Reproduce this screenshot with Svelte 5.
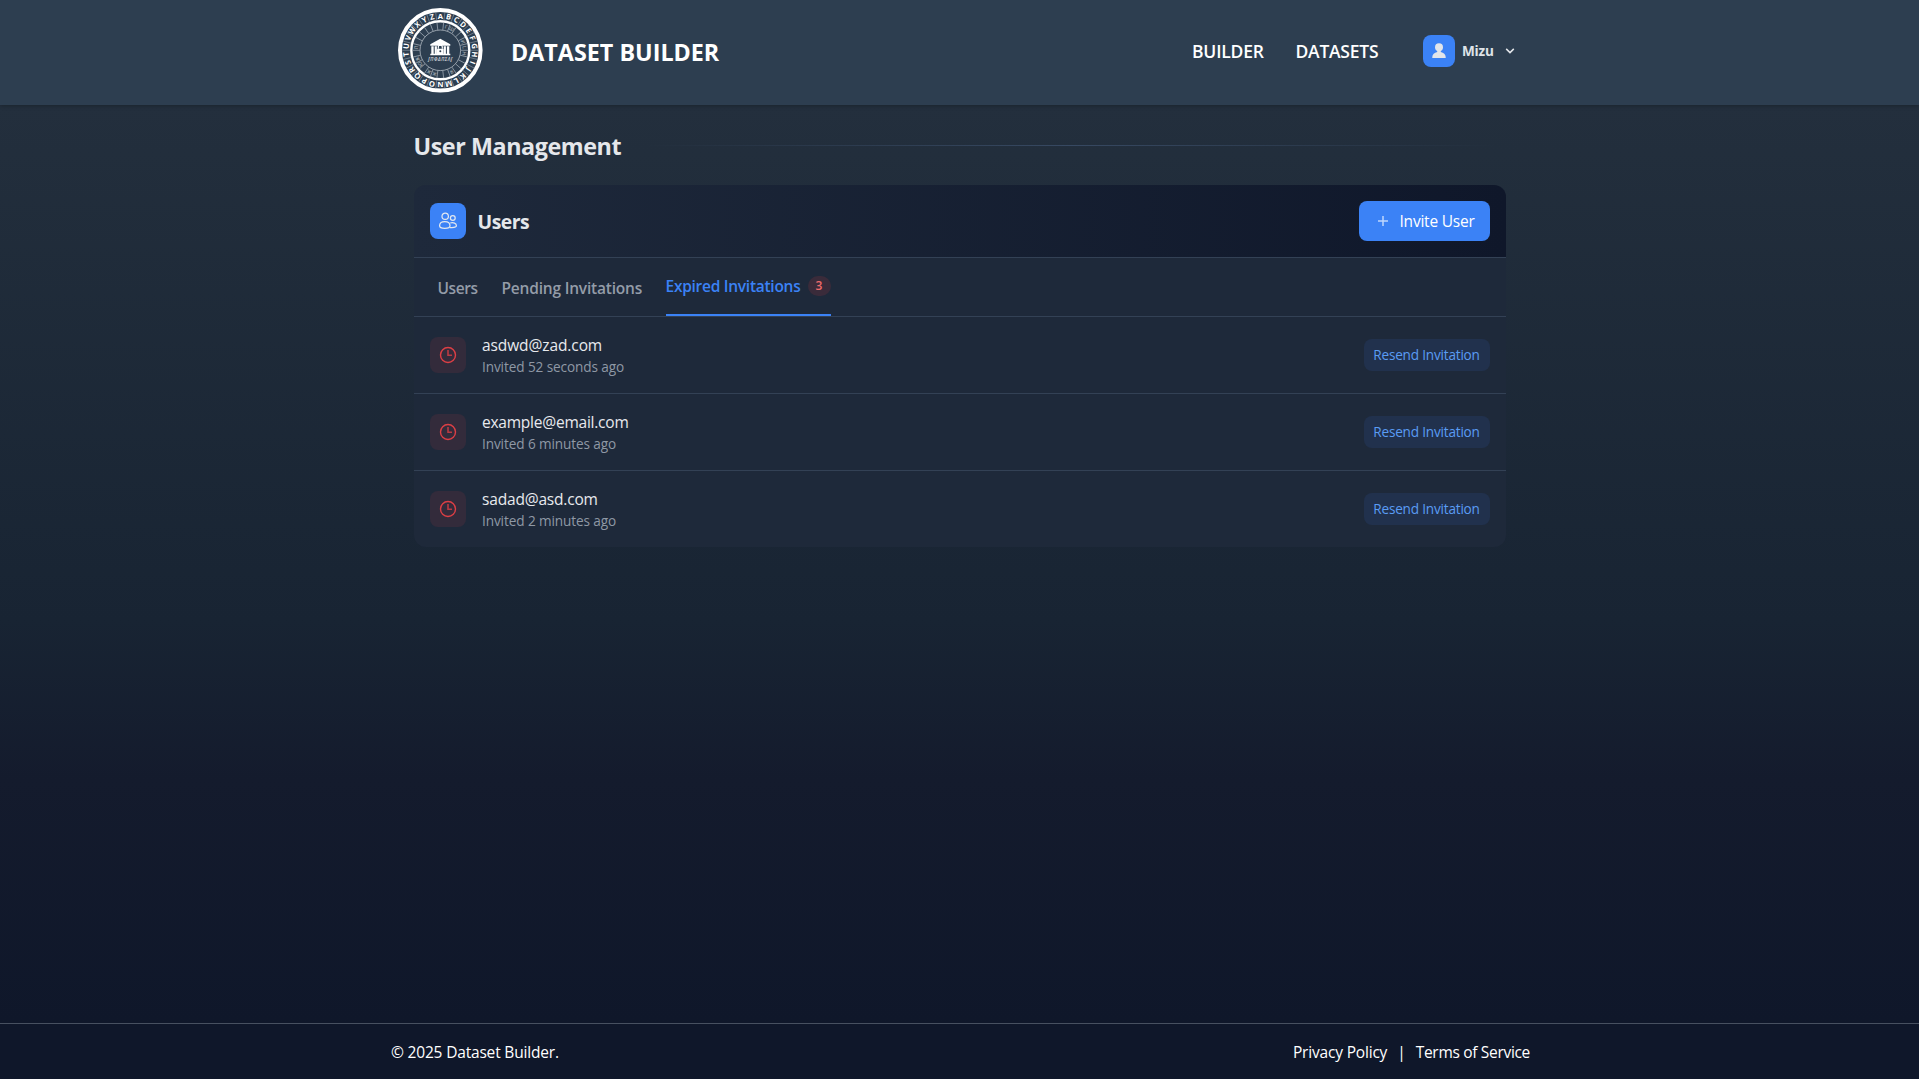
<script>
  const letters = 'ABCDEFGHIJKLMNOPQRSTUVWXYZ'.split('').map((char, i) => ({ char, angle: (i * 360) / 26 }));
  const glyphs = ['', 'Γ', 'Ш', '', '', 'И', 'L', 'H', '', '', '', 'Я', '', '', 'Ж', 'Ж', '', 'Ю', 'Ж', '', 'П', '', '', '', '', ''];

  const invitations = [
    { email: 'asdwd@zad.com', sent: 'Invited 52 seconds ago', size: 'e1' },
    { email: 'example@email.com', sent: 'Invited 6 minutes ago', size: 'e2' },
    { email: 'sadad@asd.com', sent: 'Invited 2 minutes ago', size: 'e3' }
  ];
</script>

<div class="page">
  <header>
    <div class="bar">
      <div class="brand">
        <svg class="logo" viewBox="-43.3 -43.3 86 86" width="86" height="86" aria-hidden="true">
          <circle r="40.3" fill="none" stroke="#fff" stroke-width="4" />
          <circle r="29" fill="none" stroke="#fff" stroke-width="2.4" />
          <circle r="20.3" fill="none" stroke="#c3cad1" stroke-width=".7" />
          {#each letters as { char, angle }, i}
            <g transform="rotate({angle})">
              <text class="ring" y="-31.8">{char}</text>
              <text class="inner" y="-22.5">{glyphs[i]}</text>
              <g transform="rotate(6.92)">
                <path d="M0-38.5V-30" stroke="#8b98a5" stroke-width=".6" />
                <path d="M0-28V-20.5" stroke="#a5afb9" stroke-width=".7" />
              </g>
            </g>
          {/each}
          <path d="M-10-6L0-11.6 10-6V-4.6H-10zM-9-4H-6.6V3.5H-9zM-5.6-4H-3.4V3.5H-5.6zM3.4-4H5.6V3.5H3.4zM6.6-4H9V3.5H6.6zM-10 3.5H10V5H-10z" fill="#fff" />
          <path d="M-2-1.5V-3.2a2 2 0 0 1 4 0V-1.5" fill="none" stroke="#fff" stroke-width="1.2" />
          <rect x="-3.3" y="-1.6" width="6.6" height="5.9" rx=".7" fill="#fff" />
          <circle cy="1" r="1" fill="#2d3e50" />
          <text class="motto" y="11" textLength="24">ſΠΦΔΠΣΛſ</text>
        </svg>
        <span class="name">DATASET BUILDER</span>
      </div>
      <nav>
        <a class="builder" href="#builder">BUILDER</a>
        <a class="datasets" href="#datasets">DATASETS</a>
        <button class="account">
          <span class="avatar">
            <svg viewBox="0 0 16 16" width="16" height="16" fill="#e2e5ea"><circle cx="8" cy="4.2" r="4" /><path d="M6.2 7h3.6v2c2.8.5 4.9 2.4 4.9 5v1H1.3v-1c0-2.6 2.1-4.5 4.9-5z" /></svg>
          </span>
          <span class="who">Mizu</span>
          <svg class="chevron" viewBox="0 0 10 6" width="10" height="6" fill="none" stroke="#e5e7eb" stroke-width="1.5"><path d="M1.2.9L5 4.6 8.8.9" /></svg>
        </button>
      </nav>
    </div>
  </header>

  <main>
    <div class="heading">
      <h1>User Management</h1>
      <div class="rule"></div>
    </div>
    <section class="card">
      <div class="card-head">
        <span class="tile blue">
          <svg viewBox="0 0 20 20" width="20" height="20" fill="none" stroke="#e2e8f0" stroke-width="1.25">
            <circle cx="7.2" cy="5.2" r="3.2" />
            <circle cx="14.8" cy="7" r="2.4" />
            <path d="M6.8 10.6c3.3 0 5.2 1.7 5.2 4.1 0 1.7-1.7 2.6-5.2 2.6s-5.2-.9-5.2-2.6c0-2.4 2-4.1 5.2-4.1z" />
            <path d="M12.2 12c3.3-1 6.2.5 6.2 2.8 0 1.1-1.4 1.7-4.6 1.7h-2" />
          </svg>
        </span>
        <h2>Users</h2>
        <button class="invite">
          <svg viewBox="0 0 10 10" width="10" height="10" stroke="#bfd6fd" stroke-width="1.5"><path d="M0 5H10M5 0V10" /></svg>
          <span>Invite User</span>
        </button>
      </div>
      <div class="tabs">
        <button class="tab t1">Users</button>
        <button class="tab t2">Pending Invitations</button>
        <button class="tab active"><span>Expired Invitations</span><span class="count">3</span></button>
      </div>
      <ul>
        {#each invitations as item}
          <li>
            <span class="tile red">
              <svg viewBox="0 0 18 18" width="18" height="18" fill="none" stroke="#dc3f45" stroke-width="1.4">
                <circle cx="9" cy="9" r="7.5" />
                <path d="M9 4V9.3H13" stroke-width="1.6" stroke="#b93a43" />
              </svg>
            </span>
            <div class="person">
              <span class="email {item.size}">{item.email}</span>
              <span class="sent">{item.sent}</span>
            </div>
            <button class="resend">Resend Invitation</button>
          </li>
        {/each}
      </ul>
    </section>
  </main>

  <footer>
    <div class="foot">
      <span class="copy">© 2025 Dataset Builder.</span>
      <span class="links"><a class="privacy" href="#privacy">Privacy Policy</a><span>|</span><a class="terms" href="#terms">Terms of Service</a></span>
    </div>
  </footer>
</div>

<style>
  :global(body) { background: #0f172a; }
  .page {
    height: 1079px;
    display: flex;
    flex-direction: column;
    font: 400 15.5px/24px 'Open Sans', 'Noto Sans', sans-serif;
    color: #fff;
    background: linear-gradient(180deg, #232f3d 105px, #182433 620px, #141b2d 780px, #0f172a 1023px);
    overflow: hidden;
  }
  * { box-sizing: border-box; }
  button { font: inherit; color: inherit; background: none; border: 0; padding: 0; margin: 0; }
  a { color: inherit; text-decoration: none; white-space: nowrap; }
  h1, h2, ul { margin: 0; padding: 0; }
  svg { display: block; flex: none; }

  header { flex: none; height: 105px; background: #2d3e50; box-shadow: 0 1px 4px rgba(0, 0, 0, .25); }
  .bar { width: 1125px; margin: 0 auto; height: 101px; display: flex; justify-content: space-between; align-items: center; }
  .brand { display: flex; align-items: center; gap: 28px; }
  .logo { margin-top: -1px; }
  .ring, .inner, .motto { fill: #fff; text-anchor: middle; font-family: 'Open Sans', sans-serif; }
  .ring { font-size: 7.6px; font-weight: 700; }
  .inner { font-size: 5px; opacity: .7; }
  .motto { font-size: 4.5px; font-weight: 600; font-style: italic; opacity: .8; }
  .name { font-weight: 700; font-size: 23.3px; letter-spacing: .01px; padding-top: 3px; }
  nav { display: flex; align-items: center; font-weight: 600; font-size: 17.5px; padding-right: 7px; }
  .builder { letter-spacing: -.2px; width: 103.5px; padding-top: 1px; }
  .datasets { letter-spacing: -.25px; width: 127.5px; padding-top: 1px; }
  .account { display: flex; align-items: center; }
  .avatar { display: flex; align-items: center; justify-content: center; width: 32px; height: 32px; border-radius: 8px; background: #3b82f6; }
  .who { font-size: 13.6px; font-weight: 700; color: #dfe3e8; margin-left: 7px; width: 43px; text-align: left; letter-spacing: -.2px; }

  main { flex: 1; width: 1092px; margin: 0 auto; padding-top: 25px; }
  .heading { display: flex; align-items: center; gap: 16px; height: 32px; }
  h1 { font-size: 23.3px; line-height: 32px; font-weight: 700; color: #e5e7eb; letter-spacing: -.42px; white-space: nowrap; }
  .rule { flex: 1; height: 1px; margin: 0 8px 1px 6px; background: linear-gradient(90deg, transparent, #374962, transparent); }

  .card { margin-top: 23px; border-radius: 12px; overflow: hidden; background: #1e293a; }
  .card-head { display: flex; align-items: center; height: 73px; padding: 0 16px; border-bottom: 1px solid #334155; background: linear-gradient(90deg, #1e293b, #0f172a); }
  .tile { display: flex; align-items: center; justify-content: center; flex: none; width: 36px; height: 36px; border-radius: 8px; }
  .blue { background: #3b82f6; }
  .red { background: #332b3b; }
  h2 { flex: 1; margin-left: 12px; padding-top: 2px; font-size: 19.4px; font-weight: 700; color: #e5e7eb; letter-spacing: -.5px; }
  .invite { display: flex; align-items: center; gap: 12px; width: 131px; height: 40px; padding-left: 19px; border-radius: 8px; background: #3b82f6; letter-spacing: -.22px; white-space: nowrap; }

  .tabs { display: flex; height: 59px; padding-left: 24px; border-bottom: 1px solid #334155; font-weight: 600; color: #949ca8; }
  .tab { display: flex; align-items: center; white-space: nowrap; height: 58px; padding-bottom: 0; }
  .t1 { width: 64px; letter-spacing: -.42px; }
  .t2 { width: 164px; letter-spacing: -.2px; }
  .t1, .t2 { padding-top: 1px; }
  .active { width: 165px; justify-content: space-between; color: #3b82f6; border-bottom: 2px solid #3b82f6; letter-spacing: -.27px; }
  .count { width: 23px; height: 20px; border-radius: 10px; background: #3a2b3a; color: #f16a6a; font-size: 12px; line-height: 20px; text-align: center; letter-spacing: 0; }

  ul { list-style: none; }
  li { display: flex; align-items: center; height: 77px; padding: 0 16px; border-bottom: 1px solid #334155; }
  li:last-child { height: 76px; border-bottom: 0; }
  .person { flex: 1; display: flex; flex-direction: column; margin-left: 16.5px; }
  .email { line-height: 24px; color: #e8eaee; }
  .e1 { letter-spacing: -.1px; }
  .e2 { letter-spacing: -.23px; }
  .e3 { letter-spacing: -.18px; }
  .sent { font-size: 13.6px; line-height: 20px; color: #8f98a5; letter-spacing: -.1px; }
  .resend { width: 126px; height: 32px; border-radius: 8px; background: #21314d; color: #5a9cf4; font-size: 13.6px; letter-spacing: -.2px; white-space: nowrap; }

  footer { flex: none; height: 56px; border-top: 1px solid #475060; background: #0f172a; }
  .foot { width: 1141px; margin: 0 auto; padding-left: 2px; height: 56px; display: flex; align-items: center; justify-content: space-between; }
  .copy { letter-spacing: -.18px; }
  .links { display: flex; gap: 10px; }
  .privacy { letter-spacing: -.18px; }
  .terms { letter-spacing: -.31px; }
</style>
